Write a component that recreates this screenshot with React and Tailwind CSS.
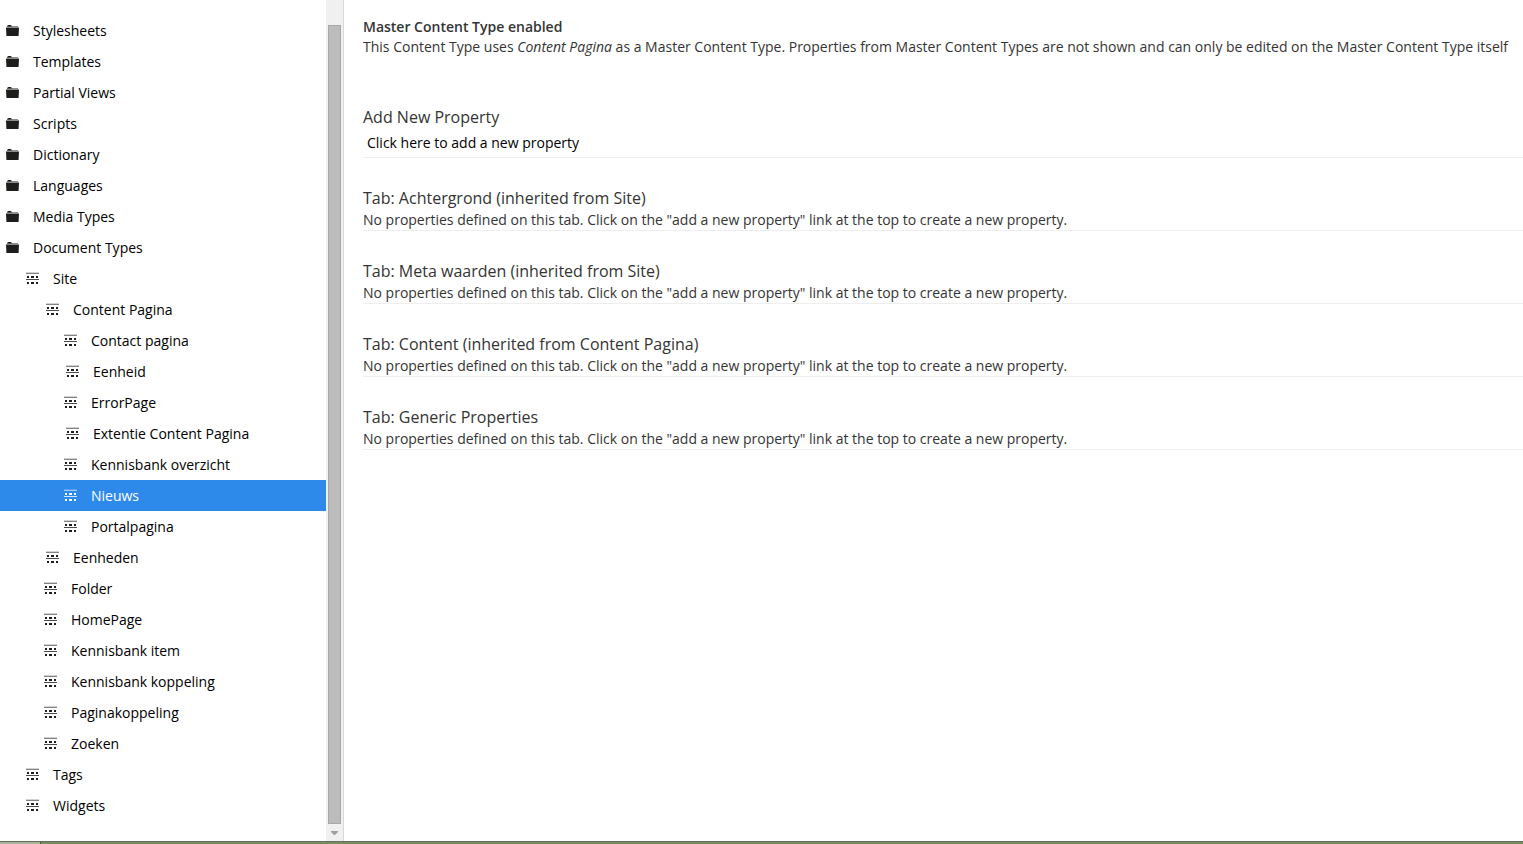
import React, {useState} from 'react'
import clsx from 'clsx'

const tree = [
	{name: 'Stylesheets', indent: 'pl-[6px]', folder: true},
	{name: 'Templates', indent: 'pl-[6px]', folder: true},
	{name: 'Partial Views', indent: 'pl-[6px]', folder: true},
	{name: 'Scripts', indent: 'pl-[6px]', folder: true},
	{name: 'Dictionary', indent: 'pl-[6px]', folder: true},
	{name: 'Languages', indent: 'pl-[6px]', folder: true},
	{name: 'Media Types', indent: 'pl-[6px]', folder: true},
	{name: 'Document Types', indent: 'pl-[6px]', folder: true},
	{name: 'Site', indent: 'pl-[26px]'},
	{name: 'Content Pagina', indent: 'pl-[46px]'},
	{name: 'Contact pagina', indent: 'pl-[64px]'},
	{name: 'Eenheid', indent: 'pl-[66px]'},
	{name: 'ErrorPage', indent: 'pl-[64px]'},
	{name: 'Extentie Content Pagina', indent: 'pl-[66px]'},
	{name: 'Kennisbank overzicht', indent: 'pl-[64px]'},
	{name: 'Nieuws', indent: 'pl-[64px]'},
	{name: 'Portalpagina', indent: 'pl-[64px]'},
	{name: 'Eenheden', indent: 'pl-[46px]'},
	{name: 'Folder', indent: 'pl-[44px]'},
	{name: 'HomePage', indent: 'pl-[44px]'},
	{name: 'Kennisbank item', indent: 'pl-[44px]'},
	{name: 'Kennisbank koppeling', indent: 'pl-[44px]'},
	{name: 'Paginakoppeling', indent: 'pl-[44px]'},
	{name: 'Zoeken', indent: 'pl-[44px]'},
	{name: 'Tags', indent: 'pl-[26px]'},
	{name: 'Widgets', indent: 'pl-[26px]'},
]

const tabs = [
	'Tab: Achtergrond (inherited from Site)',
	'Tab: Meta waarden (inherited from Site)',
	'Tab: Content (inherited from Content Pagina)',
	'Tab: Generic Properties',
]

function FolderIcon() {
	return (
		<svg aria-hidden="true" className="h-[13px] w-[13px] shrink-0" viewBox="0 0 13 13" fill="currentColor">
			<path d="M1 2.5L2 1h3l1 1.5z" />
			<path d="M1 2h11v1H1z" opacity="0.5" />
			<path d="M0 3.5h13l-.4 7.9q0 .6-.6.6H1q-.6 0-.6-.6z" />
		</svg>
	)
}

function DocTypeIcon() {
	return (
		<svg aria-hidden="true" className="h-[13px] w-[13px] shrink-0" viewBox="0 0 13 13" fill="currentColor">
			<path d="M0 0h13v1H0z" opacity="0.2" />
			<path d="M0 1h13v1H0z" opacity="0.55" />
			<path d="M0 7h13v1H0z" opacity="0.8" />
			<path d="M1 4h2v2H1zM5 4h3v2H5zM10 4h2v2h-2zM1 10h2v2H1zM5 10h3v2H5zM10 10h2v2h-2z" />
		</svg>
	)
}

export default function App() {
	const [selected, setSelected] = useState('Nieuws')

	return (
		<div className="flex min-h-screen flex-col bg-white font-['Open_Sans',sans-serif] text-sm leading-5 text-[#343434]">
			<div className="flex grow">
				<nav aria-label="Settings" className="w-[326px] shrink-0 pt-[15px]">
					<ul>
						{tree.map((item) => (
							<li key={item.name}>
								<button
									type="button"
									aria-current={selected === item.name}
									onClick={() => setSelected(item.name)}
									className={clsx(
										'flex h-[31px] w-full cursor-pointer items-center gap-[14px] text-left',
										item.indent,
										selected === item.name ? 'bg-[#2e8aea] text-white' : 'text-[#1d1d1b]'
									)}
								>
									{item.folder ? <FolderIcon /> : <DocTypeIcon />}
									<span className={selected === item.name ? 'text-white' : 'text-black'}>{item.name}</span>
								</button>
							</li>
						))}
					</ul>
				</nav>
				{/* Scrollbar */}
				<div aria-hidden="true" className="flex w-[18px] shrink-0 flex-col items-center border-r border-[#d8d8d8] bg-[#f0f0f0] pt-[25px]">
					<div className="w-[13px] grow border border-[#a8a8a8] bg-[#bcbcbc]" />
					<div className="flex h-[17px] items-center">
						<svg className="h-[4px] w-[7px]" viewBox="0 0 7 4" fill="#a0a0a0">
							<path d="M0 0h7v1L4 4H3L0 1z" />
						</svg>
					</div>
				</div>
				<main className="min-w-0 grow pl-[19px] pt-[17px]">
					<h2 className="font-semibold">Master Content Type enabled</h2>
					<p>
						This Content Type uses <em>Content Pagina</em> as a Master Content Type. Properties from Master Content Types are not shown and can only be edited on the Master Content Type itself
					</p>
					<section className="mt-12 border-b border-[#eeeeee]">
						<h3 className="text-base leading-6">Add New Property</h3>
						<button type="button" className="block cursor-pointer px-1 py-1 text-black">Click here to add a new property</button>
					</section>
					{tabs.map((tab) => (
						<section key={tab} className="mt-7 border-b border-[#eeeeee]">
							<h3 className="text-base leading-6">{tab}</h3>
							<p>No properties defined on this tab. Click on the "add a new property" link at the top to create a new property.</p>
						</section>
					))}
				</main>
			</div>
			<footer className="flex h-[3px] border-t border-[#65725a] bg-[#778a64]">
				<div className="w-[41px] border-r border-[#4f5a48] bg-[#a9b59e]" />
			</footer>
		</div>
	)
}
